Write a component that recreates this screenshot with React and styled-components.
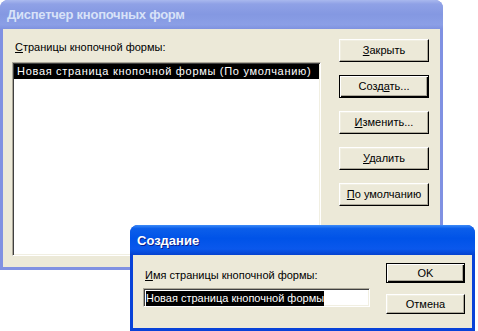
import React from "react";
import styled, { createGlobalStyle } from "styled-components";

const Global = createGlobalStyle`
  html, body { margin: 0; padding: 0; background: #fff; }
  body { font-family: "Liberation Sans", Arial, sans-serif; font-size: 11px; }
`;

const Desktop = styled.div`
  position: relative;
  width: 478px;
  height: 331px;
  overflow: hidden;
  background: #fff;
`;

const Win = styled.div`
  position: absolute;
  left: ${(p) => p.$x}px;
  top: ${(p) => p.$y}px;
  width: ${(p) => p.$w}px;
  height: ${(p) => p.$h}px;
  display: flex;
  flex-direction: column;
  box-sizing: border-box;
  border-radius: 8px 8px 0 0;
  overflow: hidden;
  background: ${(p) => (p.$active ? "#0842D8" : "#8091E2")};
`;

const TitleBar = styled.div`
  height: ${(p) => p.$h}px;
  flex: none;
  display: flex;
  align-items: center;
  padding-left: 7px;
  box-sizing: border-box;
  font-family: "Liberation Sans", Arial, sans-serif;
  font-weight: bold;
  font-size: 13px;
  letter-spacing: ${(p) => (p.$active ? "0" : "-0.25px")};
  white-space: nowrap;
  color: ${(p) => (p.$active ? "#fff" : "#D8E2F8")};
  text-shadow: ${(p) => (p.$active ? "1px 1px 0 #0A1E8A" : "none")};
  background: ${(p) =>
    p.$active
      ? "linear-gradient(180deg, #3D8BF8 0%, #0B5EEA 12%, #0053E8 45%, #0A58EC 80%, #0542CF 100%)"
      : "linear-gradient(180deg, #A9B8EE 0%, #8FA1E6 14%, #8498E2 50%, #8B9FE6 85%, #7F92E0 100%)"};
`;

const Client = styled.div`
  flex: 1;
  margin: 0 3px 3px;
  background: #ECE9D8;
  display: flex;
  box-sizing: border-box;
  padding: ${(p) => p.$pad};
  color: #000;
`;

const LeftCol = styled.div`
  display: flex;
  flex-direction: column;
`;

const Label = styled.div`
  height: 13px;
  line-height: 13px;
  margin-left: ${(p) => p.$ml || 0}px;
  white-space: nowrap;
`;

const Sunken = styled.div`
  box-sizing: border-box;
  width: ${(p) => p.$w}px;
  height: ${(p) => p.$h}px;
  margin-top: ${(p) => p.$mt}px;
  background: #fff;
  border-style: solid;
  border-width: 1px;
  border-color: #ACA899 #fff #fff #ACA899;
  box-shadow: inset 1px 1px 0 #404040, inset -1px -1px 0 #F1EFE2;
  padding: 1px 1px;
`;

const ListRow = styled.div`
  height: 15px;
  line-height: 15px;
  padding-left: 3px;
  letter-spacing: 0.7px;
  background: ${(p) => (p.$sel ? "#000" : "transparent")};
  color: ${(p) => (p.$sel ? "#fff" : "#000")};
  white-space: nowrap;
`;

const SelText = styled.span`
  display: inline-block;
  height: 15px;
  line-height: 15px;
  margin: 1px 0 0 1px;
  background: #000;
  color: #fff;
  white-space: nowrap;
`;

const ButtonCol = styled.div`
  display: flex;
  flex-direction: column;
  margin-left: auto;
  margin-top: ${(p) => p.$mt}px;
  gap: ${(p) => p.$gap}px;
`;

const Button = styled.div`
  box-sizing: border-box;
  width: ${(p) => p.$w}px;
  height: ${(p) => p.$h}px;
  display: flex;
  align-items: center;
  justify-content: center;
  background: #ECE9D8;
  white-space: nowrap;
  border-style: solid;
  border-width: 1px;
  border-color: ${(p) => (p.$def ? "#000" : "#fff #000 #000 #fff")};
  box-shadow: ${(p) =>
    p.$def
      ? "inset 1px 1px 0 #fff, inset -1px -1px 0 #000, inset -2px -2px 0 #ACA899"
      : "inset -1px -1px 0 #ACA899, inset 1px 1px 0 #F1EFE2"};
  padding-bottom: 1px;
`;

export default function App() {
  return (
    <>
      <Global />
      <Desktop>
        <Win $x={0} $y={0} $w={443} $h={270}>
          <TitleBar $h={29}>Диспетчер кнопочных форм</TitleBar>
          <Client $pad="12px 11px 0 9px">
            <LeftCol>
              <Label $ml={3}>
                <u>С</u>траницы кнопочной формы:
              </Label>
              <Sunken $w={309} $h={194} $mt={8}>
                <ListRow $sel>Новая страница кнопочной формы (По умолчанию)</ListRow>
              </Sunken>
            </LeftCol>
            <ButtonCol $gap={13} $mt={-2}>
              <Button $w={90} $h={23}>
                <span><u>З</u>акрыть</span>
              </Button>
              <Button $w={90} $h={23} $def>
                <span>Созд<u>а</u>ть...</span>
              </Button>
              <Button $w={90} $h={23}>
                <span><u>И</u>зменить...</span>
              </Button>
              <Button $w={90} $h={23}>
                <span><u>У</u>далить</span>
              </Button>
              <Button $w={90} $h={23}>
                <span><u>П</u>о умолчанию</span>
              </Button>
            </ButtonCol>
          </Client>
        </Win>
        <Win $x={130} $y={225} $w={345} $h={106} $active>
          <TitleBar $h={30} $active>Создание</TitleBar>
          <Client $pad="14px 7px 0 10px">
            <LeftCol>
              <Label $ml={2}>
                <u>И</u>мя страницы кнопочной формы:
              </Label>
              <Sunken $w={227} $h={19} $mt={6}>
                <SelText>Новая страница кнопочной формы</SelText>
              </Sunken>
            </LeftCol>
            <ButtonCol $gap={11} $mt={-6}>
              <Button $w={79} $h={20} $def>OK</Button>
              <Button $w={79} $h={20}>Отмена</Button>
            </ButtonCol>
          </Client>
        </Win>
      </Desktop>
    </>
  );
}
